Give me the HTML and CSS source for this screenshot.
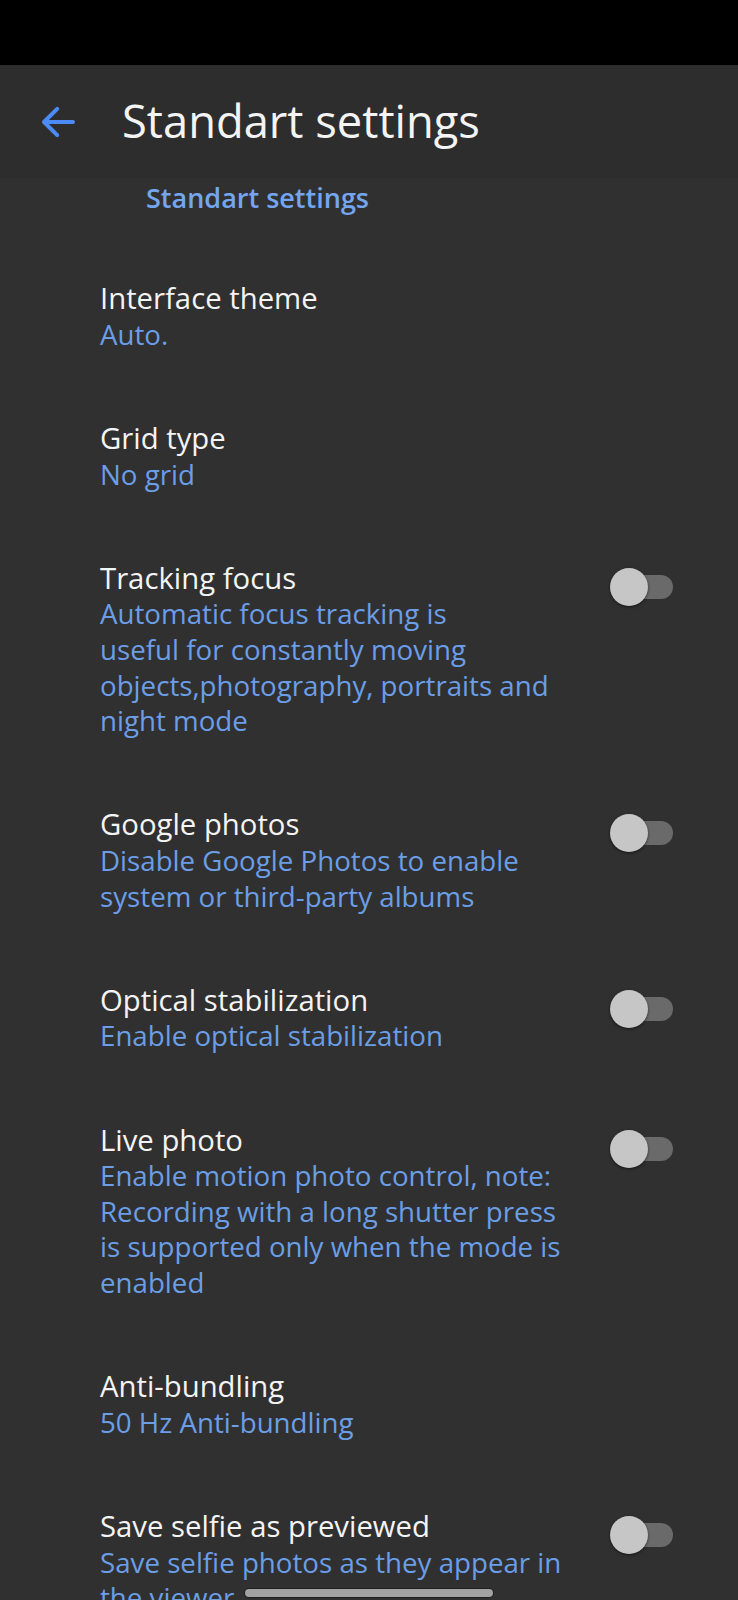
FILE: index.html
```html
<!DOCTYPE html>
<html lang="en">
<head>
<meta charset="utf-8">
<title>Standart settings</title>
<link rel="stylesheet" href="styles.css">
</head>
<body>
<div class="screen">
  <div class="status"></div>
  <header class="appbar">
    <svg class="back" viewBox="0 0 24 24" width="48" height="48" aria-hidden="true">
      <path d="M19.5 12H5 M11.6 5.4L5 12l6.6 6.6" fill="none" stroke="#4c8bf5" stroke-width="2" stroke-linecap="round" stroke-linejoin="round"/>
    </svg>
    <h1 class="title">Standart settings</h1>
  </header>
  <main class="content">
    <div class="category">Standart settings</div>

    <div class="item">
      <div class="text">
        <div class="label">Interface theme</div>
        <div class="desc">Auto.</div>
      </div>
    </div>

    <div class="item">
      <div class="text">
        <div class="label">Grid type</div>
        <div class="desc">No grid</div>
      </div>
    </div>

    <div class="item">
      <div class="text">
        <div class="label">Tracking focus</div>
        <div class="desc">Automatic focus tracking is<br>useful for constantly moving<br>objects,photography, portraits and<br>night mode</div>
      </div>
      <div class="switch"></div>
    </div>

    <div class="item">
      <div class="text">
        <div class="label">Google photos</div>
        <div class="desc">Disable Google Photos to enable<br>system or third-party albums</div>
      </div>
      <div class="switch"></div>
    </div>

    <div class="item">
      <div class="text">
        <div class="label">Optical stabilization</div>
        <div class="desc">Enable optical stabilization</div>
      </div>
      <div class="switch"></div>
    </div>

    <div class="item">
      <div class="text">
        <div class="label">Live photo</div>
        <div class="desc">Enable motion photo control, note:<br>Recording with a long shutter press<br>is supported only when the mode is<br>enabled</div>
      </div>
      <div class="switch"></div>
    </div>

    <div class="item">
      <div class="text">
        <div class="label">Anti-bundling</div>
        <div class="desc">50 Hz Anti-bundling</div>
      </div>
    </div>

    <div class="item">
      <div class="text">
        <div class="label">Save selfie as previewed</div>
        <div class="desc">Save selfie photos as they appear in<br>the viewer</div>
      </div>
      <div class="switch"></div>
    </div>
  </main>
  <div class="home-indicator"></div>
</div>
</body>
</html>
```

FILE: styles.css
```css
html, body {
  margin: 0;
  padding: 0;
  background: #303030;
}

body {
  font-family: "Open Sans", "Noto Sans", sans-serif;
  -webkit-font-smoothing: antialiased;
}

.screen {
  position: relative;
  width: 738px;
  height: 1600px;
  overflow: hidden;
  background: #303030;
}

.status {
  height: 65px;
  background: #000000;
}

.appbar {
  height: 113px;
  display: flex;
  align-items: center;
  background: #2d2d2d;
}

.back {
  display: block;
  margin-left: 34px;
  flex: none;
}

.title {
  margin: 0 0 3px 40px;
  font-size: 45.3px;
  font-weight: 400;
  color: #f4f4f4;
  line-height: normal;
}

.content {
  display: flex;
  flex-direction: column;
}

.category {
  padding: 5px 0 34px 146px;
  font-size: 27px;
  line-height: 30px;
  font-weight: 600;
  color: #74a6f0;
}

.item {
  display: flex;
  align-items: flex-start;
  padding: 34.3px 65px 34.3px 100px;
  gap: 16px;
}

.text {
  flex: 1;
  min-width: 0;
}

.label {
  font-size: 29.3px;
  line-height: 35.6px;
  color: #f4f4f4;
  white-space: nowrap;
}

.desc {
  font-size: 27.7px;
  line-height: 35.6px;
  color: #6b9ee6;
  white-space: nowrap;
}

.switch {
  position: relative;
  flex: none;
  width: 63px;
  height: 40px;
  margin-top: 6px;
}

.switch::before {
  content: "";
  position: absolute;
  left: 4px;
  right: 0;
  top: 8px;
  height: 24px;
  border-radius: 12px;
  background: #6a6a6a;
}

.switch::after {
  content: "";
  position: absolute;
  left: 0;
  top: 1px;
  width: 38px;
  height: 38px;
  border-radius: 50%;
  background: #c6c6c6;
  box-shadow: 0 1px 3px rgba(0, 0, 0, 0.55);
}

.home-indicator {
  position: absolute;
  left: 245px;
  top: 1589px;
  width: 248px;
  height: 8px;
  border-radius: 4px;
  background: #a2a2a2;
  box-shadow: 0 0 0 1px rgba(0, 0, 0, 0.35);
}
```
